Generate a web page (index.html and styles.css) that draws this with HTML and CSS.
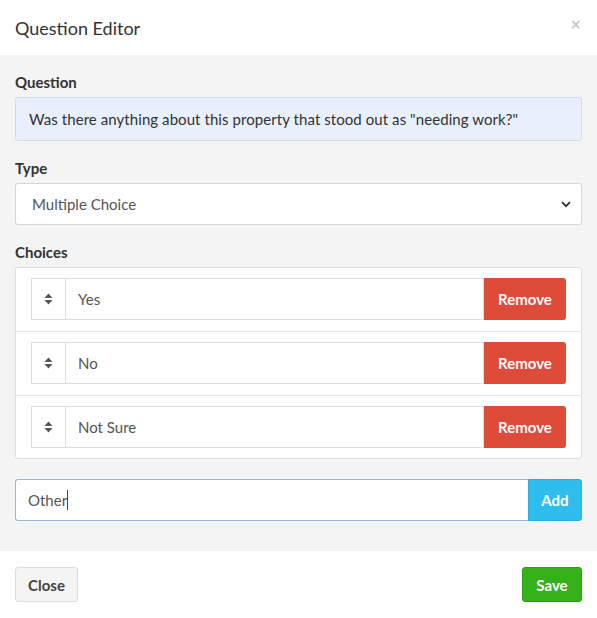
FILE: index.html
```html
<!DOCTYPE html>
<html>
<head>
<meta charset="utf-8">
<link rel="stylesheet" href="styles.css">
</head>
<body>
<div class="modal">
  <div class="modal-header">
    <span class="modal-title">Question Editor</span>
    <span class="close-x">×</span>
  </div>
  <div class="modal-body">
    <div class="form-group">
      <div class="label">Question</div>
      <div class="question-box">Was there anything about this property that stood out as "needing work?"</div>
    </div>
    <div class="form-group">
      <div class="label">Type</div>
      <div class="select">
        <span>Multiple Choice</span>
        <svg class="chevron" width="10" height="7" viewBox="0 0 10 7"><path d="M1 1.2 L5 5.2 L9 1.2" fill="none" stroke="#333" stroke-width="1.8"/></svg>
      </div>
    </div>
    <div class="form-group">
      <div class="label">Choices</div>
      <div class="choices">
        <div class="choice-row">
          <div class="input-group">
            <div class="handle"><svg width="9" height="12" viewBox="0 0 9 12"><path d="M4.5 0.5 L8.5 5 L0.5 5 Z M0.5 7 L8.5 7 L4.5 11.5 Z" fill="#555"/></svg></div>
            <div class="choice-input">Yes</div>
            <div class="btn-remove">Remove</div>
          </div>
        </div>
        <div class="choice-row">
          <div class="input-group">
            <div class="handle"><svg width="9" height="12" viewBox="0 0 9 12"><path d="M4.5 0.5 L8.5 5 L0.5 5 Z M0.5 7 L8.5 7 L4.5 11.5 Z" fill="#555"/></svg></div>
            <div class="choice-input">No</div>
            <div class="btn-remove">Remove</div>
          </div>
        </div>
        <div class="choice-row">
          <div class="input-group">
            <div class="handle"><svg width="9" height="12" viewBox="0 0 9 12"><path d="M4.5 0.5 L8.5 5 L0.5 5 Z M0.5 7 L8.5 7 L4.5 11.5 Z" fill="#555"/></svg></div>
            <div class="choice-input">Not Sure</div>
            <div class="btn-remove">Remove</div>
          </div>
        </div>
      </div>
    </div>
    <div class="add-group">
      <div class="add-input">Other<span class="caret"></span></div>
      <div class="btn-add">Add</div>
    </div>
  </div>
  <div class="modal-footer">
    <div class="btn-close">Close</div>
    <div class="btn-save">Save</div>
  </div>
</div>
</body>
</html>
```
FILE: styles.css
```css
html, body {
  margin: 0;
  padding: 0;
  background: #fff;
}
body {
  font-family: "Source Sans Pro", Lato, "Liberation Sans", sans-serif;
  font-size: 15px;
  color: #333;
}
.modal {
  width: 597px;
}
.modal-header {
  height: 55px;
  padding: 0 15px;
  display: flex;
  align-items: center;
  justify-content: space-between;
  box-sizing: border-box;
}
.modal-title {
  font-size: 18px;
  color: #333;
}
.close-x {
  font-size: 18px;
  color: #c8c8c8;
  font-weight: bold;
  margin-right: 1px;
  margin-top: -8px;
}
.modal-body {
  background: #f4f4f4;
  padding: 17px 15px 30px;
}
.form-group {
  margin-bottom: 17px;
}
.label {
  font-weight: bold;
  line-height: 20px;
  margin-bottom: 5px;
  color: #333;
}
.question-box {
  background: #e8f0fd;
  border: 1px solid #d2dbe6;
  border-radius: 3px;
  height: 42px;
  padding: 0 13px;
  display: flex;
  align-items: center;
  color: #333;
  letter-spacing: 0.07px;
}
.select {
  background: #fff;
  border: 1px solid #d6d6d6;
  border-radius: 3px;
  height: 40px;
  padding: 0 10px 0 16px;
  display: flex;
  align-items: center;
  justify-content: space-between;
  color: #555;
}
.choices {
  background: #fff;
  border: 1px solid #ddd;
  border-radius: 3px;
}
.choice-row {
  padding: 10px 15px 11px;
  border-bottom: 1px solid #e4e4e4;
}
.choice-row:last-child {
  border-bottom: none;
  padding-bottom: 10px;
}
.input-group {
  display: flex;
  height: 42px;
}
.handle {
  width: 34px;
  box-sizing: border-box;
  border: 1px solid #ddd;
  border-right: none;
  display: flex;
  align-items: center;
  justify-content: center;
}
.choice-input {
  flex: 1;
  border: 1px solid #ddd;
  padding: 0 12px;
  display: flex;
  align-items: center;
  color: #555;
}
.btn-remove {
  width: 82px;
  background: #dd4b39;
  color: #fff;
  font-weight: bold;
  border-radius: 0 3px 3px 0;
  display: flex;
  align-items: center;
  justify-content: center;
}
.add-group {
  margin-top: 20px;
  display: flex;
  height: 42px;
}
.add-input {
  flex: 1;
  background: #fff;
  border: 1px solid #97b9d6;
  border-right: none;
  border-radius: 3px 0 0 3px;
  padding: 0 12px;
  display: flex;
  align-items: center;
  color: #555;
}
.caret {
  display: inline-block;
  width: 1px;
  height: 20px;
  background: #444;
}
.btn-add {
  width: 54px;
  background: #2fbdee;
  border: 1px solid #2aafdc;
  box-sizing: border-box;
  color: #fff;
  font-weight: bold;
  border-radius: 0 3px 3px 0;
  display: flex;
  align-items: center;
  justify-content: center;
}
.modal-footer {
  background: #fff;
  padding: 16px 15px;
  display: flex;
  justify-content: space-between;
}
.btn-close {
  width: 63px;
  height: 35px;
  box-sizing: border-box;
  background: #f4f4f4;
  border: 1px solid #ddd;
  border-radius: 3px;
  color: #444;
  font-weight: bold;
  display: flex;
  align-items: center;
  justify-content: center;
}
.btn-save {
  width: 60px;
  height: 35px;
  box-sizing: border-box;
  background: #35b11a;
  border: 1px solid #2d9e14;
  border-radius: 3px;
  color: #fff;
  font-weight: bold;
  display: flex;
  align-items: center;
  justify-content: center;
}
```
